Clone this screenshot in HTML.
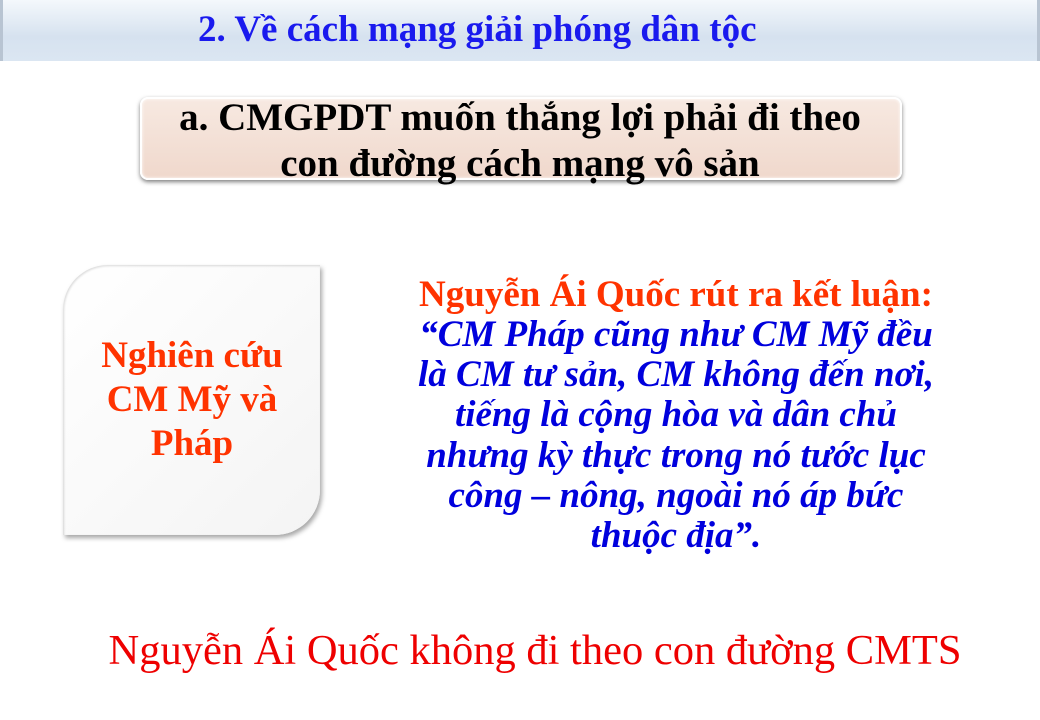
<!DOCTYPE html>
<html><head><meta charset="utf-8"><style>
body{margin:0;width:1040px;height:720px;background:#fff;position:relative;overflow:hidden;font-family:"Liberation Serif",serif}
.hdr{position:absolute;left:0;top:0;width:1040px;height:61px;background:linear-gradient(#f4f8fc,#d6e2ef 60%,#dbe6f2);border-left:3px solid #b8c4d2;border-right:3px solid #b8c4d2;box-sizing:border-box}
.t{position:absolute;white-space:nowrap;font-weight:bold}
.pink{position:absolute;left:140px;top:97px;width:762px;height:83px;border-radius:8px;background:linear-gradient(#f7e9e1,#f0d8cc);box-shadow:0 2px 4px rgba(0,0,0,.5),inset 0 0 3px rgba(255,255,255,.9);border:2px solid #fff;box-sizing:border-box}
.card{position:absolute;left:63px;top:265px;width:257px;height:270px;background:linear-gradient(135deg,#fff,#f4f4f4);border-radius:45px 0 45px 0;box-shadow:2px 3px 5px rgba(0,0,0,.35),inset 1px 1px 2px rgba(0,0,0,.15)}
.c{position:absolute;text-align:center;white-space:nowrap;font-weight:bold}
</style></head><body>
<div class="hdr"></div>
<div class="t" style="left:198px;top:8px;font-size:37px;line-height:44px;color:#1a1aee">2. Về cách mạng giải phóng dân tộc</div>
<div class="pink"></div>
<div class="c" style="left:120px;width:800px;top:95px;font-size:39px;line-height:46px;color:#000">a. CMGPDT muốn thắng lợi phải đi theo<br>con đường cách mạng vô sản</div>
<div class="card"></div>
<div class="c" style="left:52px;width:280px;top:334px;font-size:37px;line-height:44px;color:#ff3300">Nghiên cứu<br>CM Mỹ và<br>Pháp</div>
<div class="c" style="left:376px;width:600px;top:275px;font-size:37px;line-height:40px;color:#ff3300">Nguyễn Ái Quốc rút ra kết luận:</div>
<div class="c" style="left:376px;width:600px;top:315px;font-size:37px;line-height:40.2px;color:#0000dd;font-style:italic">“CM Pháp cũng như CM Mỹ đều<br>là CM tư sản, CM không đến nơi,<br>tiếng là cộng hòa và dân chủ<br>nhưng kỳ thực trong nó tước lục<br>công – nông, ngoài nó áp bức<br>thuộc địa”.</div>
<div class="c" style="left:0;width:1070px;top:626px;font-size:42.5px;font-weight:normal;color:#ee0000">Nguyễn Ái Quốc không đi theo con đường CMTS</div>
</body></html>
